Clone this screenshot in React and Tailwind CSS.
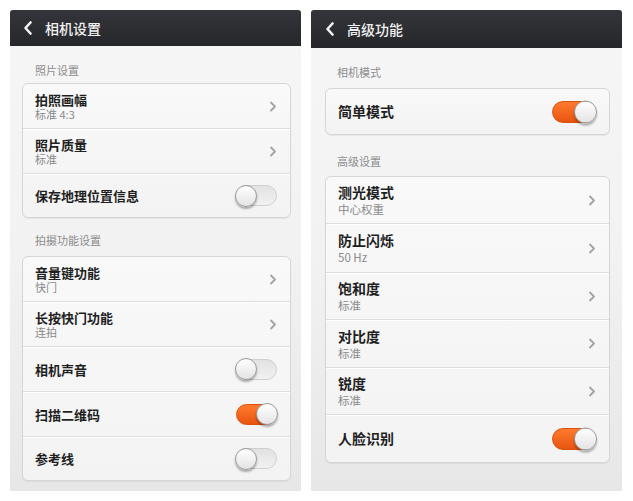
import React from "react";

const FONT = { fontFamily: '"Noto Sans CJK SC", "Noto Sans", sans-serif' };

function BackIcon() {
  return (
    <svg width="10" height="14" viewBox="0 0 10 14" className="shrink-0">
      <path d="M7.5 1.5 L2.5 7 L7.5 12.5" fill="none" stroke="#f2f2f2" strokeWidth="2.6" strokeLinecap="round" strokeLinejoin="round" />
    </svg>
  );
}

function Chevron() {
  return (
    <svg width="8" height="11" viewBox="0 0 8 11" className="shrink-0">
      <path d="M2 1.5 L6 5.5 L2 9.5" fill="none" stroke="#a3a3a3" strokeWidth="1.8" strokeLinecap="round" strokeLinejoin="round" />
    </svg>
  );
}

function Toggle({ on, big }) {
  const size = big ? "w-[44px] h-[22px]" : "w-[41px] h-[21px]";
  const knob = big ? "w-[23px] h-[23px]" : "w-[22px] h-[22px]";
  return (
    <div
      className={`relative shrink-0 rounded-full ${size} ${
        on
          ? "bg-gradient-to-b from-[#ff7a2e] to-[#e8540c] border border-[#d9520e]"
          : "bg-gradient-to-b from-[#e2e2e2] to-[#f1f1f1] border border-[#cfcfcf]"
      }`}
    >
      <div
        className={`absolute top-1/2 -translate-y-1/2 rounded-full ${knob} bg-gradient-to-b from-[#ffffff] to-[#e4e4e4] border border-[#9a9a9a] shadow-[0_2px_2px_rgba(0,0,0,0.3)] ${
          on ? "right-[-2px]" : "left-[-2px]"
        }`}
      />
    </div>
  );
}

function Header({ title, tall }) {
  return (
    <div
      className={`flex items-center gap-[12px] rounded-t-[3px] bg-gradient-to-b from-[#34353a] to-[#26272b] ${
        tall ? "h-[38px] pl-[14px]" : "h-[36px] pl-[13px]"
      }`}
    >
      <BackIcon />
      <span className="text-[14px] leading-[18px] font-medium text-[#f0f0f0]">{title}</span>
    </div>
  );
}

function Row({ title, sub, toggle, on, h, divider, big }) {
  return (
    <div
      className={`flex items-center justify-between pl-[12px] pr-[13px] ${h} ${
        divider ? "border-b border-[#dedede] shadow-[0_1px_0_#ffffff]" : ""
      }`}
    >
      <div className="flex flex-col">
        <span
          className={`font-bold text-[#1f1f1f] ${big ? "text-[14px] leading-[17px]" : "text-[13px] leading-[15px]"}`}
        >
          {title}
        </span>
        {sub && (
          <span
            className={`text-[#8a8a8a] ${
              big ? "text-[11.5px] leading-[14px] mt-[1px]" : "text-[11px] leading-[13px] mt-[1px]"
            }`}
          >
            {sub}
          </span>
        )}
      </div>
      {toggle ? <Toggle on={on} big={big} /> : <Chevron />}
    </div>
  );
}

function Card({ children, className }) {
  return (
    <div
      className={`rounded-[6px] border border-[#d6d6d6] bg-gradient-to-b from-[#f9f9f9] to-[#f3f3f3] shadow-[0_1px_1px_rgba(0,0,0,0.06)] overflow-hidden ${className}`}
    >
      {children}
    </div>
  );
}

function Label({ children, className }) {
  return <div className={`text-[11px] leading-[14px] text-[#8d8d8d] ${className}`}>{children}</div>;
}

export default function App() {
  return (
    <div className="w-[633px] h-[501px] bg-white flex gap-[10px] pt-[10px] pl-[10px]" style={FONT}>
      {/* camera settings screen */}
      <div className="w-[291px] h-[481px] flex flex-col bg-gradient-to-b from-[#f6f6f6] via-[#f2f2f2] to-[#e7e7e7]">
        <Header title="相机设置" />
        <Label className="pl-[25px] pt-[17px] pb-[6px]">照片设置</Label>
        <Card className="ml-[12px] mr-[10px]">
          <Row title="拍照画幅" sub="标准 4:3" h="h-[45px]" divider />
          <Row title="照片质量" sub="标准" h="h-[45px]" divider />
          <Row title="保存地理位置信息" toggle on={false} h="h-[43px]" />
        </Card>
        <Label className="pl-[25px] pt-[15px] pb-[9px]">拍摄功能设置</Label>
        <Card className="ml-[12px] mr-[10px]">
          <Row title="音量键功能" sub="快门" h="h-[45px]" divider />
          <Row title="长按快门功能" sub="连拍" h="h-[45px]" divider />
          <Row title="相机声音" toggle on={false} h="h-[45px]" divider />
          <Row title="扫描二维码" toggle on h="h-[45px]" divider />
          <Row title="参考线" toggle on={false} h="h-[43px]" />
        </Card>
      </div>

      {/* advanced features screen */}
      <div className="w-[311px] h-[481px] flex flex-col bg-gradient-to-b from-[#f6f6f6] via-[#f2f2f2] to-[#e7e7e7]">
        <Header title="高级功能" tall />
        <Label className="pl-[26px] pt-[17px] pb-[9px]">相机模式</Label>
        <Card className="ml-[14px] mr-[12px]">
          <Row big title="简单模式" toggle on h="h-[45px]" />
        </Card>
        <Label className="pl-[26px] pt-[19px] pb-[8px]">高级设置</Label>
        <Card className="ml-[14px] mr-[12px]">
          <Row big title="测光模式" sub="中心权重" h="h-[47px]" divider />
          <Row big title="防止闪烁" sub="50 Hz" h="h-[49px]" divider />
          <Row big title="饱和度" sub="标准" h="h-[47px]" divider />
          <Row big title="对比度" sub="标准" h="h-[48px]" divider />
          <Row big title="锐度" sub="标准" h="h-[47px]" divider />
          <Row big title="人脸识别" toggle on h="h-[47px]" />
        </Card>
      </div>
    </div>
  );
}
